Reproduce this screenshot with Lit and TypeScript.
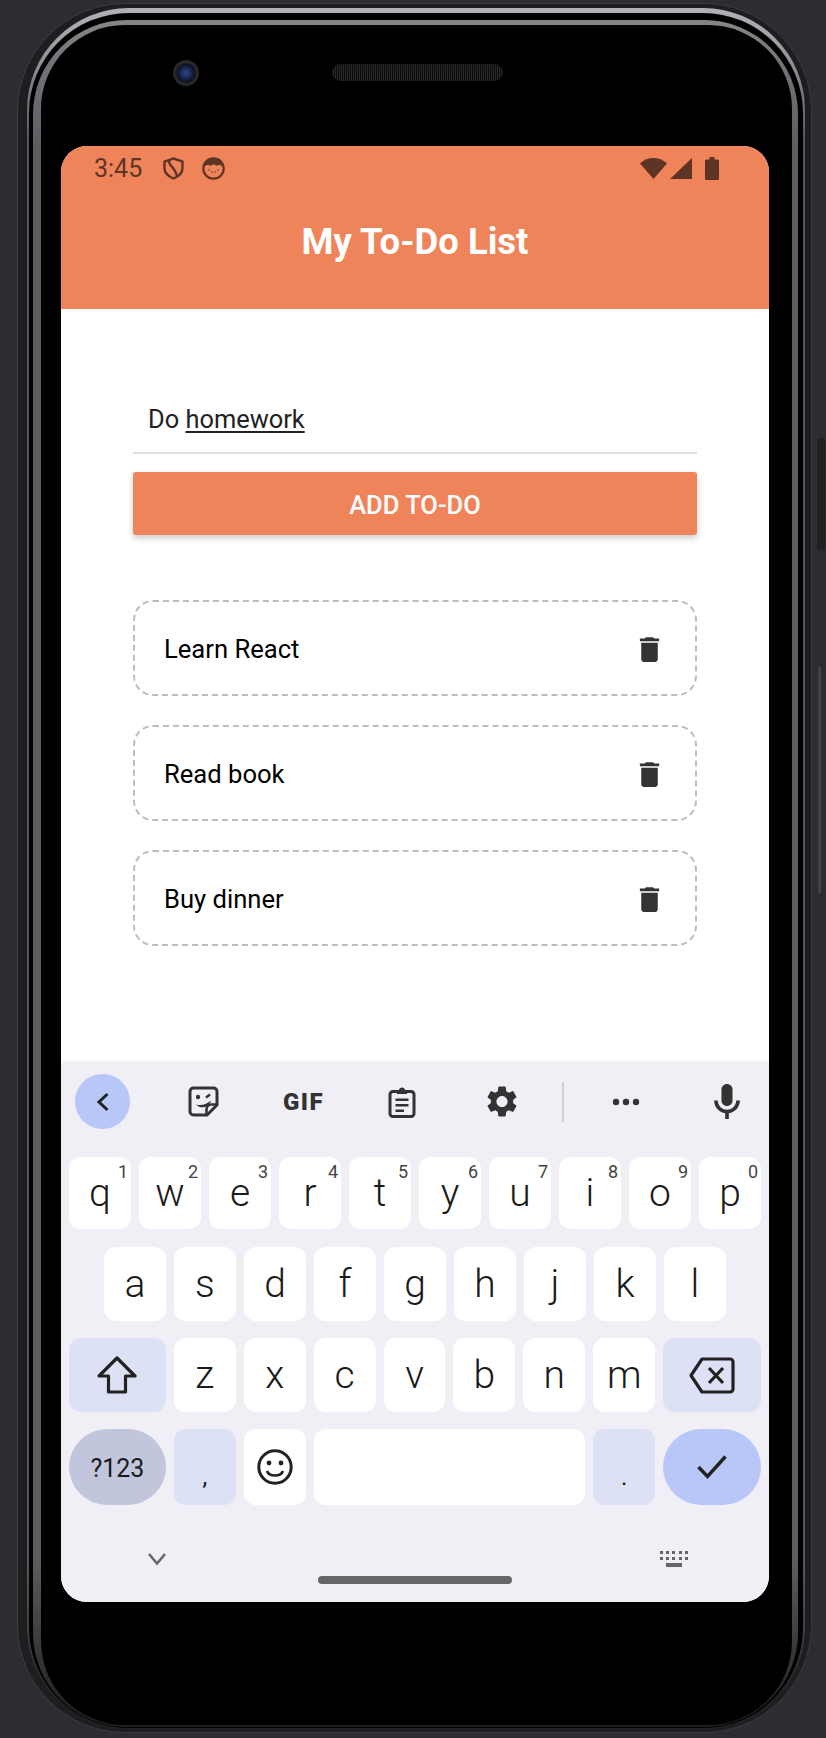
import { LitElement, html, css } from "lit";
import { customElement, state } from "lit/decorators.js";

const ROW_ONE = [
  ["q", "1"], ["w", "2"], ["e", "3"], ["r", "4"], ["t", "5"],
  ["y", "6"], ["u", "7"], ["i", "8"], ["o", "9"], ["p", "0"],
];
const ROW_TWO = ["a", "s", "d", "f", "g", "h", "j", "k", "l"];
const ROW_THREE = ["z", "x", "c", "v", "b", "n", "m"];

@customElement("app-root")
export class AppRoot extends LitElement {
  static styles = css`
    :host {
      display: block;
      position: relative;
      width: 826px;
      height: 1738px;
      overflow: hidden;
      background: #2b2d30;
      font-family: Roboto, "Liberation Sans", sans-serif;
    }
    * {
      box-sizing: border-box;
    }
    svg {
      display: block;
      flex: none;
    }

    /* phone body, each layer is one ring of the frame */
    .shell {
      width: 795px;
      height: 1730px;
      margin: 3px 0 0 17px;
      padding: 4px 6px 3px 9px;
      border: 1px solid #3b3c3f;
      border-radius: 108px;
      background: #1d1e20;
    }
    .rim {
      height: 100%;
      padding: 5px 2px 1px 2px;
      border-radius: 102px;
      background: linear-gradient(180deg, #b0b2b5 0, #a0a2a5 30px, #55575a 130px, #55575a 1560px, #222 1700px);
    }
    .gap {
      height: 100%;
      padding: 7px 5px 1px 4px;
      border-radius: 100px;
      background: #000;
    }
    .band {
      height: 100%;
      padding: 5px 6px 2px 8px;
      border-radius: 94px;
      background: linear-gradient(180deg, #84868a 0, #73757a 40px, #5b5d61 130px, #5b5d61 1540px, #1f1f21 1690px);
    }
    .face {
      height: 100%;
      border-radius: 84px;
      background: #000;
    }
    .bezel {
      display: flex;
      align-items: center;
      height: 121px;
      padding: 0 0 26px 132px;
    }
    .camera {
      width: 26px;
      height: 26px;
      border-radius: 50%;
      background: radial-gradient(circle at 50% 50%, #2f4a8e 0, #1a2a5a 26%, #0e1222 48%, #2a2b2e 60%, #161618 100%);
    }
    .speaker {
      width: 171px;
      height: 17px;
      margin-left: 133px;
      border-radius: 9px;
      border: 1px solid #1a1a1a;
      background: repeating-linear-gradient(90deg, #2a2a2a 0 1px, #0c0c0c 1px 2px);
    }
    .side {
      position: absolute;
      left: 817px;
      width: 8px;
      border-radius: 3px;
      background: #1f2022;
    }
    .side.volume {
      top: 438px;
      height: 112px;
    }
    .side.power {
      top: 667px;
      height: 226px;
      width: 6px;
      background: linear-gradient(90deg, #26272a 0, #47494c 40%, #26272a 100%);
    }

    .screen {
      display: flex;
      flex-direction: column;
      width: 708px;
      height: 1456px;
      margin-left: 20px;
      border-radius: 26px;
      overflow: hidden;
      background: #fff;
    }

    /* app bar */
    .header {
      height: 163px;
      background: #ef845a;
      flex: none;
    }
    .status {
      display: flex;
      align-items: center;
      height: 44px;
      padding: 0 50px 0 33px;
      color: #5e3424;
      font-size: 25px;
    }
    .clock {
      width: 69px;
    }
    .shield {
      width: 21px;
      height: 23px;
    }
    .kid {
      width: 23px;
      height: 23px;
      margin-left: 18px;
    }
    .wifi {
      width: 27px;
      height: 21px;
      margin-left: auto;
    }
    .signal {
      width: 22px;
      height: 21px;
      margin-left: 3px;
    }
    .battery {
      width: 14px;
      height: 23px;
      margin-left: 13px;
    }
    .title {
      margin: 0;
      padding-top: 9px;
      color: #fff;
      font-size: 36.5px;
      font-weight: 700;
      line-height: 86px;
      text-align: center;
    }

    /* to-do form */
    .body {
      flex: 1;
      padding: 71px 72px 0;
    }
    .field {
      height: 74px;
      padding: 24px 0 0 15px;
      border-bottom: 2px solid #e0e0e0;
      color: #222;
      font-size: 25.4px;
      line-height: 30px;
    }
    .field u {
      text-underline-offset: 3px;
    }
    .add {
      display: flex;
      align-items: center;
      justify-content: center;
      height: 63px;
      margin-top: 18px;
      padding-top: 2px;
      border-radius: 3px;
      background: #ef845a;
      box-shadow: 0 3px 6px rgba(0, 0, 0, 0.22);
      color: #fff;
      font-size: 25.5px;
      font-weight: 500;
    }
    .list {
      display: flex;
      flex-direction: column;
      gap: 29px;
      margin-top: 65px;
    }
    .todo {
      display: flex;
      align-items: center;
      justify-content: space-between;
      height: 96px;
      padding: 2px 29px 0 29px;
      border: 2px dashed #bdbdbd;
      border-radius: 20px;
      color: #000;
      font-size: 25.6px;
    }
    .trash {
      width: 33px;
      height: 33px;
      fill: #333;
    }

    /* keyboard */
    .keyboard {
      flex: none;
      height: 540px;
      background: #f0eff6;
      color: #1a1a1a;
      box-shadow: 0 -1px 3px rgba(0, 0, 0, 0.06);
    }
    .tools {
      display: flex;
      align-items: center;
      height: 95px;
      padding: 0 0 16px 14px;
    }
    .tools svg {
      fill: #333;
    }
    .back {
      display: flex;
      align-items: center;
      justify-content: center;
      width: 55px;
      height: 55px;
      border-radius: 50%;
      background: #b8c6f8;
    }
    .chevron {
      width: 14px;
      height: 20px;
    }
    .tools .chevron {
      fill: none;
    }
    .sticker {
      width: 31px;
      height: 31px;
      margin-left: 58px;
    }
    .gif {
      width: 40px;
      margin-left: 64px;
      color: #333;
      font-size: 24px;
      font-weight: 900;
      letter-spacing: 1.5px;
      line-height: 24px;
    }
    .clipboard {
      width: 28px;
      height: 32px;
      margin-left: 65px;
    }
    .gear {
      width: 30px;
      height: 31px;
      margin-left: 71px;
    }
    .divider {
      width: 2px;
      height: 40px;
      margin-left: 45px;
      background: #cfcfd4;
    }
    .dots {
      width: 28px;
      height: 8px;
      margin-left: 48px;
    }
    .mic {
      width: 26px;
      height: 35px;
      margin-left: 74px;
    }
    .rows {
      display: flex;
      flex-direction: column;
      gap: 17px;
      padding: 0 8px;
    }
    .row {
      display: flex;
      gap: 8px;
      height: 74px;
    }
    .row.first {
      height: 72px;
    }
    .row.home {
      height: 76px;
    }
    .row.inset {
      margin-top: 1px;
      padding-left: 35px;
    }
    .key {
      position: relative;
      display: flex;
      align-items: center;
      justify-content: center;
      width: 62px;
      border-radius: 12px;
      background: #fff;
      font-size: 39px;
      font-weight: 300;
      line-height: 1;
    }
    .hint {
      position: absolute;
      top: 6px;
      right: 3px;
      color: #444;
      font-size: 18px;
      font-weight: 400;
      line-height: 18px;
    }
    .mod {
      background: #dde1f5;
    }
    .wide {
      width: 98px;
    }
    .shift {
      width: 97px;
    }
    .symbols {
      width: 97px;
      padding-top: 2px;
      border-radius: 38px;
      background: #c2c6dc;
      font-size: 25px;
      font-weight: 400;
    }
    .space {
      width: 272px;
    }
    .punct {
      align-items: flex-end;
      padding-bottom: 16px;
      font-size: 24px;
      font-weight: 400;
    }
    .done {
      border-radius: 38px;
      background: #b8c6f8;
    }
    .nav {
      display: flex;
      align-items: center;
      justify-content: space-between;
      margin-top: 46px;
      padding: 0 81px 0 87px;
    }
    .pill {
      width: 194px;
      height: 8px;
      margin: 9px auto 0;
      border-radius: 4px;
      background: #666;
    }
  `;

  @state() todos = ["Learn React", "Read book", "Buy dinner"];

  renderTrash() {
    return html`<svg class="trash" viewBox="0 0 24 24">
      <path d="M6 19c0 1.1.9 2 2 2h8c1.1 0 2-.9 2-2V7H6v12zM19 4h-3.5l-1-1h-5l-1 1H5v2h14V4z"></path>
    </svg>`;
  }

  renderStatus() {
    return html`<div class="status">
      <span class="clock">3:45</span>
      <svg class="shield" viewBox="0 0 21 23" fill="none" stroke="#5e3424" stroke-width="2.4">
        <path d="M10.5 1.5 19.5 4.5V11C19.5 16 15.5 19.5 10.5 21.5 5.5 19.5 1.5 16 1.5 11V4.5Z"></path>
        <path d="M6 3.5C5 9 13 10 14 20"></path>
      </svg>
      <svg class="kid" viewBox="0 0 23 23">
        <circle cx="11.5" cy="11.5" r="10.2" fill="none" stroke="#5e3424" stroke-width="2.2"></circle>
        <path d="M2.5 9.5C3 4 7 1.5 11.5 1.5S20 4 20.5 9.5C18 7.5 16 7.5 14.5 9 13 7 10 7 8.5 9 7 7.5 5 7.5 2.5 9.5Z" fill="#5e3424"></path>
        <g fill="#5e3424" opacity="0.6">
          <circle cx="7" cy="13" r="0.9"></circle>
          <circle cx="10" cy="15" r="0.9"></circle>
          <circle cx="13" cy="15" r="0.9"></circle>
          <circle cx="16" cy="13" r="0.9"></circle>
        </g>
      </svg>
      <svg class="wifi" viewBox="0 0 27 21"><path d="M0 5.5C8 -1.8 19 -1.8 27 5.5L13.5 21Z" fill="#5e3424"></path></svg>
      <svg class="signal" viewBox="0 0 22 21"><path d="M0 21 22 0V21Z" fill="#5e3424"></path></svg>
      <svg class="battery" viewBox="0 0 14 23"><path d="M4.5 0H9.5V2.5H12.5A1.5 1.5 0 0 1 14 4V21.5A1.5 1.5 0 0 1 12.5 23H1.5A1.5 1.5 0 0 1 0 21.5V4A1.5 1.5 0 0 1 1.5 2.5H4.5Z" fill="#5e3424"></path></svg>
    </div>`;
  }

  renderTools() {
    return html`<div class="tools">
      <div class="back">
        <svg class="chevron" viewBox="0 0 14 20" stroke="#222" stroke-width="3">
          <path d="M11.5 2 3 10l8.5 8"></path>
        </svg>
      </div>
      <svg class="sticker" viewBox="0 0 31 31">
        <path d="M5.5 2H25.5A3.5 3.5 0 0 1 29 5.5V19L19 29H5.5A3.5 3.5 0 0 1 2 25.5V5.5A3.5 3.5 0 0 1 5.5 2Z" fill="none" stroke="#333" stroke-width="3"></path>
        <path d="M29 18.5H23A5 5 0 0 0 18.5 23V29" fill="none" stroke="#333" stroke-width="2.6"></path>
        <circle cx="10" cy="11" r="2.2"></circle>
        <path d="M18 11.5 22 8.5" fill="none" stroke="#333" stroke-width="2.6"></path>
        <path d="M8 18.5C14 20 19 18 23 14.5 22 20 14 24.5 8 18.5Z"></path>
      </svg>
      <span class="gif">GIF</span>
      <svg class="clipboard" viewBox="0 0 28 32">
        <path d="M5 5.5H23A3 3 0 0 1 26 8.5V27.5A3 3 0 0 1 23 30.5H5A3 3 0 0 1 2 27.5V8.5A3 3 0 0 1 5 5.5Z" fill="none" stroke="#333" stroke-width="3"></path>
        <path d="M9 4H11C11 0.5 17 0.5 17 4H19V8H9Z"></path>
        <path d="M7.5 12.5H20.5V15H7.5ZM7.5 18H20.5V20.5H7.5ZM7.5 23.5H16V26H7.5Z"></path>
      </svg>
      <svg class="gear" viewBox="2.5 2 19 20">
        <path d="M19.14 12.94c.04-.3.06-.61.06-.94 0-.32-.02-.64-.07-.94l2.03-1.58c.18-.14.23-.41.12-.61l-1.92-3.32c-.12-.22-.37-.29-.59-.22l-2.39.96c-.5-.38-1.03-.7-1.62-.94l-.36-2.54c-.04-.24-.24-.41-.48-.41h-3.84c-.24 0-.43.17-.47.41l-.36 2.54c-.59.24-1.13.57-1.62.94l-2.39-.96c-.22-.08-.47 0-.59.22L2.74 8.87c-.12.21-.08.47.12.61l2.03 1.58c-.05.3-.09.63-.09.94s.02.64.07.94l-2.03 1.58c-.18.14-.23.41-.12.61l1.92 3.32c.12.22.37.29.59.22l2.39-.96c.5.38 1.03.7 1.62.94l.36 2.54c.05.24.24.41.48.41h3.84c.24 0 .44-.17.47-.41l.36-2.54c.59-.24 1.13-.56 1.62-.94l2.39.96c.22.08.47 0 .59-.22l1.92-3.32c.12-.22.07-.47-.12-.61l-2.01-1.58zM12 15.6c-1.98 0-3.6-1.62-3.6-3.6s1.62-3.6 3.6-3.6 3.6 1.62 3.6 3.6-1.62 3.6-3.6 3.6z"></path>
      </svg>
      <div class="divider"></div>
      <svg class="dots" viewBox="0 0 28 8">
        <circle cx="4" cy="4" r="3.2"></circle>
        <circle cx="14" cy="4" r="3.2"></circle>
        <circle cx="24" cy="4" r="3.2"></circle>
      </svg>
      <svg class="mic" viewBox="5 2 14 19">
        <path d="M12 14c1.66 0 3-1.34 3-3V5c0-1.66-1.34-3-3-3S9 3.34 9 5v6c0 1.66 1.34 3 3 3z"></path>
        <path d="M17 11c0 2.76-2.24 5-5 5s-5-2.24-5-5H5c0 3.53 2.61 6.43 6 6.92V21h2v-3.08c3.39-.49 6-3.39 6-6.92h-2z"></path>
      </svg>
    </div>`;
  }

  renderKeys() {
    return html`<div class="rows">
      <div class="row first">
        ${ROW_ONE.map(([l, n]) => html`<div class="key">${l}<span class="hint">${n}</span></div>`)}
      </div>
      <div class="row inset">
        ${ROW_TWO.map((l) => html`<div class="key">${l}</div>`)}
      </div>
      <div class="row">
        <div class="key mod shift">
          <svg width="40" height="38" viewBox="0 0 40 38" fill="none" stroke="#222" stroke-width="3.2" stroke-linejoin="round">
            <path d="M20 2 38 20H28.5V36H11.5V20H2Z"></path>
          </svg>
        </div>
        ${ROW_THREE.map((l) => html`<div class="key">${l}</div>`)}
        <div class="key mod wide">
          <svg width="46" height="37" viewBox="0 0 46 37" fill="none" stroke="#222" stroke-width="3.2" stroke-linejoin="round">
            <path d="M13 2H41A3 3 0 0 1 44 5V32A3 3 0 0 1 41 35H13L2 18.5Z"></path>
            <path d="M20 11 34 26M34 11 20 26"></path>
          </svg>
        </div>
      </div>
      <div class="row home">
        <div class="key symbols">?123</div>
        <div class="key mod punct">,</div>
        <div class="key">
          <svg width="36" height="36" viewBox="0 0 36 36">
            <circle cx="18" cy="18" r="16.2" fill="none" stroke="#222" stroke-width="3"></circle>
            <circle cx="12" cy="14" r="2.4" fill="#222"></circle>
            <circle cx="24" cy="14" r="2.4" fill="#222"></circle>
            <path d="M10 22C12 28 24 28 26 22" fill="none" stroke="#222" stroke-width="2.6"></path>
          </svg>
        </div>
        <div class="key space"></div>
        <div class="key mod punct">.</div>
        <div class="key wide done">
          <svg width="30" height="24" viewBox="0 0 30 24" fill="none" stroke="#222" stroke-width="3.4">
            <path d="M1.5 12 10.5 21.5 28.5 1.5"></path>
          </svg>
        </div>
      </div>
    </div>`;
  }

  renderNav() {
    return html`<div class="nav">
      <svg width="18" height="12" viewBox="0 0 18 12" fill="none" stroke="#666" stroke-width="2.6">
        <path d="M1 1 9 10.5 17 1"></path>
      </svg>
      <svg width="28" height="16" viewBox="0 0 28 16" fill="#666">
        <path d="M0 0h3v3H0zM6 0h3v3H6zM12 0h3v3h-3zM19 0h3v3h-3zM25 0h3v3h-3zM0 6h3v3H0zM6 6h3v3H6zM12 6h3v3h-3zM19 6h3v3h-3zM25 6h3v3h-3zM6 12h16v4H6z"></path>
      </svg>
    </div>
    <div class="pill"></div>`;
  }

  render() {
    return html`
      <div class="side volume"></div>
      <div class="side power"></div>
      <div class="shell">
        <div class="rim">
          <div class="gap">
            <div class="band">
              <div class="face">
                <div class="bezel">
                  <div class="camera"></div>
                  <div class="speaker"></div>
                </div>
                <div class="screen">
                  <div class="header">
                    ${this.renderStatus()}
                    <h1 class="title">My To-Do List</h1>
                  </div>
                  <div class="body">
                    <div class="field">Do <u>homework</u></div>
                    <div class="add">ADD TO-DO</div>
                    <div class="list">
                      ${this.todos.map((t) => html`<div class="todo"><span>${t}</span>${this.renderTrash()}</div>`)}
                    </div>
                  </div>
                  <div class="keyboard">
                    ${this.renderTools()} ${this.renderKeys()} ${this.renderNav()}
                  </div>
                </div>
              </div>
            </div>
          </div>
        </div>
      </div>
    `;
  }
}
